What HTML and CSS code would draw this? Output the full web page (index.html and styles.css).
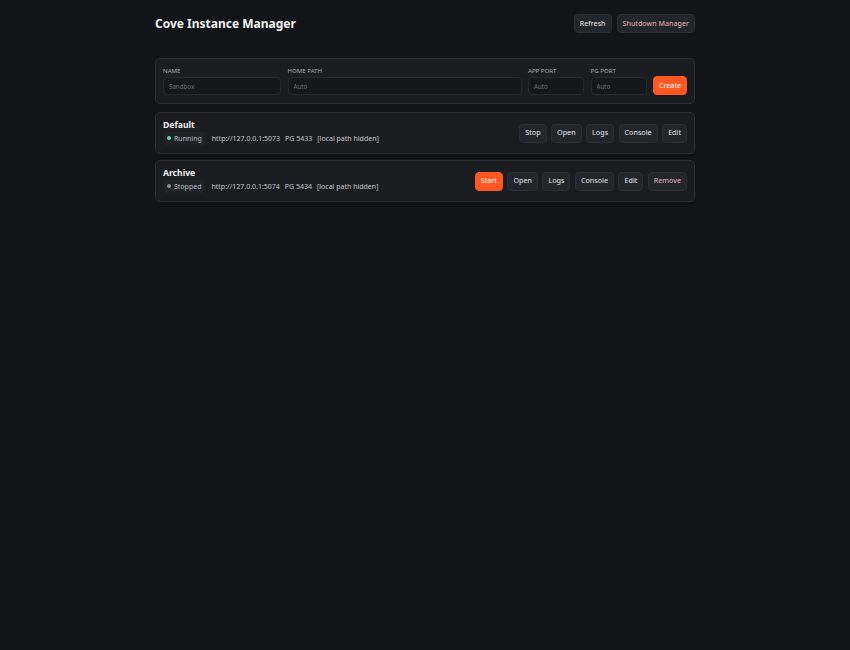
FILE: index.html
```html
<!DOCTYPE html>
<html lang="en">
<head>
    <meta charset="UTF-8">
    <meta name="viewport" content="width=device-width, initial-scale=1.0">
    <title>Cove Instance Manager</title>
    <link rel="stylesheet" href="styles.css">
</head>
<body>
    <main class="wrap">
        <header class="top">
            <h1>Cove Instance Manager</h1>
            <div class="top-actions">
                <button class="btn">Refresh</button>
                <button class="btn danger">Shutdown Manager</button>
            </div>
        </header>

        <form class="card create">
            <label class="field name">
                <span>Name</span>
                <input type="text" placeholder="Sandbox">
            </label>
            <label class="field path">
                <span>Home path</span>
                <input type="text" placeholder="Auto">
            </label>
            <label class="field port">
                <span>App port</span>
                <input type="text" placeholder="Auto">
            </label>
            <label class="field port">
                <span>PG port</span>
                <input type="text" placeholder="Auto">
            </label>
            <button type="button" class="btn primary">Create</button>
        </form>

        <div class="card instance">
            <div class="info">
                <h2>Default</h2>
                <div class="meta">
                    <span class="pill"><i class="dot on"></i>Running</span>
                    <span>http://127.0.0.1:5073</span>
                    <span>PG 5433</span>
                    <span>[local path hidden]</span>
                </div>
            </div>
            <div class="actions">
                <button class="btn">Stop</button>
                <button class="btn">Open</button>
                <button class="btn">Logs</button>
                <button class="btn">Console</button>
                <button class="btn">Edit</button>
            </div>
        </div>

        <div class="card instance">
            <div class="info">
                <h2>Archive</h2>
                <div class="meta">
                    <span class="pill"><i class="dot"></i>Stopped</span>
                    <span>http://127.0.0.1:5074</span>
                    <span>PG 5434</span>
                    <span>[local path hidden]</span>
                </div>
            </div>
            <div class="actions">
                <button class="btn primary">Start</button>
                <button class="btn">Open</button>
                <button class="btn">Logs</button>
                <button class="btn">Console</button>
                <button class="btn">Edit</button>
                <button class="btn danger">Remove</button>
            </div>
        </div>
    </main>
</body>
</html>
```

FILE: styles.css
```css
*{
    margin:0;
    padding:0;
    box-sizing: border-box;
}
body{
    background-color: #131417;
    color: #e8e9eb;
    font-family: "Noto Sans", "Open Sans", sans-serif;
    font-size: 7px;
}

.wrap{
    width: 540px;
    margin: 0 auto;
    padding-top: 14px;
}

.top{
    display: flex;
    justify-content: space-between;
    align-items: center;
    margin-bottom: 25px;
}
.top h1{
    font-size: 12px;
    font-weight: 700;
    color: #f1f2f4;
}
.top-actions{
    display: flex;
    gap: 5px;
}

.btn{
    font-family: inherit;
    font-size: 7.2px;
    color: #e4e5e8;
    background-color: #22252a;
    border: 1px solid #2b2e33;
    border-radius: 4px;
    height: 19px;
    padding: 0 5px;
    line-height: 1;
}
.btn.primary{
    background-color: #ff5722;
    border-color: #ff5722;
    color: #fff;
}
.btn.danger{
    color: #e7b3b8;
}

.card{
    background-color: #1a1c1f;
    border: 1px solid #2a2d31;
    border-radius: 5px;
}

.create{
    display: flex;
    align-items: flex-end;
    gap: 6.5px;
    padding: 7px 7px 8px;
    margin-bottom: 8px;
}
.field{
    display: flex;
    flex-direction: column;
    gap: 2px;
}
.field span{
    font-size: 6.1px;
    text-transform: uppercase;
    color: #a9acb2;
}
.field input{
    font-family: inherit;
    font-size: 6.2px;
    height: 18px;
    padding: 0 5px;
    background-color: #15171a;
    border: 1px solid #262a2e;
    border-radius: 4px;
    color: #e8e9eb;
}
.field input::placeholder{
    color: #6c7077;
}
.name{
    width: 118px;
}
.path{
    flex: 1;
}
.port{
    width: 56px;
}
.create .btn{
    width: 34px;
    padding: 0;
}

.instance{
    display: flex;
    justify-content: space-between;
    align-items: center;
    padding: 0 7px;
    margin-bottom: 6px;
    height: 42px;
}
.info{
    padding-bottom: 3px;
}
.instance h2{
    font-size: 8.6px;
    font-weight: 700;
    color: #f1f2f4;
    margin-bottom: 1px;
}
.meta{
    display: flex;
    align-items: center;
    gap: 5px;
    color: #c5c8cd;
}
.pill{
    display: inline-flex;
    align-items: center;
    gap: 3px;
    padding: 2px 4px;
    border-radius: 4px;
    background-color: #1f2226;
    color: #b9bcc1;
    margin-right: 1px;
}
.dot{
    width: 4px;
    height: 4px;
    border-radius: 50%;
    background-color: #8b8f96;
}
.dot.on{
    background-color: #5fd6a6;
}
.actions{
    display: flex;
    gap: 4.5px;
}
```
